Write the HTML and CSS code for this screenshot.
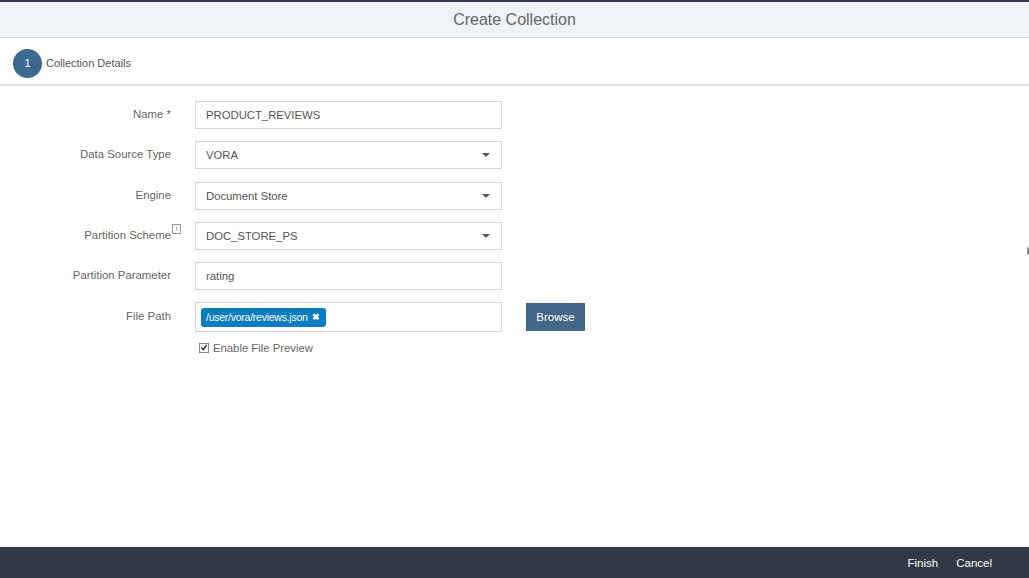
FILE: index.html
```html
<!DOCTYPE html>
<html>
<head>
<meta charset="utf-8">
<link rel="stylesheet" href="styles.css">
</head>
<body>
<div class="page">
  <div class="topline"></div>
  <header class="header">Create Collection</header>
  <div class="steps">
    <span class="step-num">1</span>
    <span class="step-label">Collection Details</span>
  </div>
  <main class="main">
    <div class="form">
      <label class="lbl">Name *</label>
      <div class="field"><span class="val">PRODUCT_REVIEWS</span></div>
      <div class="empty"></div>

      <label class="lbl">Data Source Type</label>
      <div class="field select"><span class="val">VORA</span><span class="caret"></span></div>
      <div class="empty"></div>

      <label class="lbl">Engine</label>
      <div class="field select"><span class="val">Document Store</span><span class="caret"></span></div>
      <div class="empty"></div>

      <label class="lbl">Partition Scheme<span class="info">i</span></label>
      <div class="field select"><span class="val">DOC_STORE_PS</span><span class="caret"></span></div>
      <div class="empty"></div>

      <label class="lbl">Partition Parameter</label>
      <div class="field"><span class="val">rating</span></div>
      <div class="empty"></div>

      <label class="lbl">File Path</label>
      <div class="field tokens"><span class="token">/user/vora/reviews.json <span class="tx">&#x2716;</span></span></div>
      <button class="browse">Browse</button>

      <div class="empty"></div>
      <div class="check-row">
        <span class="cbox"><svg width="9" height="9" viewBox="0 0 9 9"><path d="M1.5 4.6 L3.6 6.8 L7.6 1.6" fill="none" stroke="#333" stroke-width="1.6"/></svg></span>
        <span class="check-label">Enable File Preview</span>
      </div>
      <div class="empty"></div>
    </div>
    <span class="edge"></span>
  </main>
  <footer class="footer">
    <span class="fbtn">Finish</span>
    <span class="fbtn">Cancel</span>
  </footer>
</div>
</body>
</html>
```
FILE: styles.css
```css
html, body {
  margin: 0;
  padding: 0;
  background: #ffffff;
}
body {
  font-family: "Liberation Sans", Arial, sans-serif;
  color: #666;
}
.page {
  display: flex;
  flex-direction: column;
  height: 100vh;
}
.topline {
  height: 2px;
  background: #323c48;
}
.header {
  height: 35px;
  background: #eef3f8;
  border-bottom: 1px solid #d5dae0;
  display: flex;
  align-items: center;
  justify-content: center;
  font-size: 16px;
  color: #666;
}
.steps {
  height: 42px;
  padding-top: 4px;
  border-bottom: 2px solid #e6e6e6;
  display: flex;
  align-items: center;
  padding-left: 13px;
  gap: 4px;
}
.step-num {
  width: 29px;
  height: 29px;
  border-radius: 50%;
  background: #3d6990;
  color: #fff;
  font-size: 11px;
  display: flex;
  align-items: center;
  justify-content: center;
}
.step-label {
  font-size: 11px;
  color: #555;
}
.main {
  flex: 1;
  position: relative;
}
.form {
  display: grid;
  grid-template-columns: 171px 307px 59px;
  column-gap: 24px;
  row-gap: 12.3px;
  padding-top: 15px;
  align-items: center;
}
.lbl {
  text-align: right;
  font-size: 11.4px;
  color: #666;
  position: relative;
  top: -1px;
}
.info {
  position: absolute;
  right: -10px;
  top: -5px;
  width: 7px;
  height: 8px;
  border: 1px solid #999;
  font-size: 7px;
  line-height: 8px;
  text-align: center;
  color: #777;
}
.field {
  height: 26px;
  border: 1px solid #d6d6d6;
  display: flex;
  align-items: center;
  padding: 0 10px;
  font-size: 11.3px;
  color: #555;
  position: relative;
}
.select .val {
  flex: 1;
}
.caret {
  width: 0;
  height: 0;
  border-left: 4px solid transparent;
  border-right: 4px solid transparent;
  border-top: 4px solid #555;
  margin-right: 1px;
}
.tokens {
  height: 28px;
  padding: 0 5px;
}
.token {
  background: #0a7cc0;
  color: #fff;
  border-radius: 3px;
  font-size: 10.5px;
  letter-spacing: -0.25px;
  height: 19px;
  padding: 0 6px 0 5px;
  display: inline-flex;
  align-items: center;
  gap: 4px;
}
.tx {
  font-size: 9px;
  font-weight: bold;
  letter-spacing: 0;
}
.browse {
  height: 28px;
  width: 59px;
  background: #436788;
  border: none;
  color: #fff;
  font-family: "Liberation Sans", Arial, sans-serif;
  font-size: 11.5px;
  padding: 0;
}
.check-row {
  display: flex;
  align-items: center;
  gap: 4px;
  padding-left: 4px;
  margin-top: -3px;
}
.cbox {
  width: 8px;
  height: 8px;
  border: 1px solid #888;
  background: #fff;
  display: inline-flex;
  align-items: center;
  justify-content: center;
}
.check-label {
  font-size: 11.3px;
  color: #666;
}
.edge {
  position: absolute;
  right: 0;
  top: 161px;
  width: 2px;
  height: 8px;
  background: #888;
  border-radius: 2px 0 0 2px;
}
.footer {
  height: 31px;
  background: #2f3a46;
  display: flex;
  align-items: center;
  justify-content: flex-end;
  gap: 18px;
  padding-right: 37px;
}
.fbtn {
  color: #fff;
  font-size: 11.5px;
}
```
